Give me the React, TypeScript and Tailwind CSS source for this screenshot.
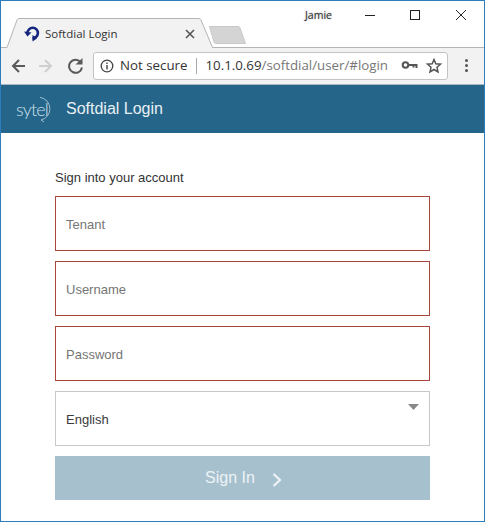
import React from "react";

const Field = ({ label }: { label: string }) => (
  <div className="h-[55px] border border-[#a9473f] bg-white flex items-center pl-[10px] pt-[2px] text-[13px] text-[#757575]">
    {label}
  </div>
);

export default function App() {
  return (
    <div
      className="w-[485px] h-[522px] border border-[#2b7dbd] bg-white flex flex-col overflow-hidden"
      style={{ fontFamily: '"Liberation Sans", Arial, sans-serif' }}
    >
      {/* Title bar with tabs */}
      <div className="relative h-[47px] shrink-0 bg-white border-b border-[#b4b4b4]">
        <svg className="absolute left-0 top-[17px]" width="250" height="30" viewBox="0 0 250 30" fill="none">
          <path d="M6 29.500L16 2C16.500 1 17.500 0.500 19 0.500H197C198.500 0.500 199.500 1 200 2L211.500 29.500" fill="#f2f2f2" stroke="#b4b4b4" />
          <path d="M6.500 29.500H211" stroke="#f2f2f2" strokeWidth="1.500" />
          <path d="M208.500 8.500H237C238 8.500 238.600 9 239 10L244.500 25.500H215C214 25.500 213.400 25 213 24Z" fill="#d4d4d4" stroke="#c8c8c8" />
        </svg>
        <div className="absolute left-[23px] top-[24px]">
          <svg width="16" height="17" viewBox="0 0 16 17" fill="none">
            <path d="M3.500 8A5.200 5.200 0 1 1 8.500 13.200" stroke="#17267f" strokeWidth="2.600" />
            <path d="M0 6.500L3.500 11.500L7.500 7.500Z" fill="#14247a" />
            <path d="M8.500 10V16.500L13 13.500Z" fill="#14247a" />
          </svg>
        </div>
        <span className="absolute left-[44px] top-[25px] text-[11.500px] leading-[15px] text-[#333]" style={{ fontFamily: '"Open Sans", sans-serif' }}>
          Softdial Login
        </span>
        <svg className="absolute left-[184px] top-[28px]" width="10" height="10" viewBox="0 0 10 10">
          <path d="M1 1L9 9M9 1L1 9" stroke="#555" strokeWidth="1.600" />
        </svg>
        <span className="absolute left-[304px] top-[8px] text-[10.500px] leading-[13px] text-[#333]" style={{ fontFamily: '"Open Sans", sans-serif', textShadow: "0 0 2px #999" }}>
          Jamie
        </span>
        <svg className="absolute left-[364px] top-[9px]" width="110" height="12" viewBox="0 0 110 12" fill="none" stroke="#222">
          <path d="M0 5.500H10" />
          <rect x="45.500" y="0.500" width="9" height="9" />
          <path d="M91 0L101 10M101 0L91 10" />
        </svg>
      </div>

      {/* Toolbar */}
      <div className="h-[37px] shrink-0 bg-[#f2f2f2] border-b border-[#a9b9c2] flex items-center">
        <div className="w-[92px] shrink-0 relative h-full">
          <svg className="absolute left-[10px] top-[10px]" width="76" height="16" viewBox="0 0 76 16" fill="none" strokeWidth="2">
            <path d="M14 8H2.500M8 2L2 8L8 14" stroke="#5a5a5a" />
            <path d="M28 8H39.500M34 2L40 8L34 14" stroke="#cfcfcf" />
            <path d="M69.500 4A6.500 6.500 0 1 0 71 9.500" stroke="#5a5a5a" />
            <path d="M64.500 6.500H71.500V0Z" fill="#5a5a5a" />
          </svg>
        </div>
        <div className="w-[355px] h-[28px] shrink-0 bg-white border border-[#c4c4c4] rounded-[3px] flex items-center relative" style={{ fontFamily: '"Open Sans", sans-serif' }}>
          <svg className="ml-[6px] shrink-0" width="14" height="14" viewBox="0 0 14 14" fill="none">
            <circle cx="7" cy="7" r="5.800" stroke="#444" strokeWidth="1.300" />
            <path d="M7 6V10.500M7 3.500V5" stroke="#444" strokeWidth="1.400" />
          </svg>
          <span className="ml-[6px] text-[#333] text-[13.300px]">Not secure</span>
          <span className="ml-[9px] w-px h-[16px] bg-[#aaa]" />
          <span className="ml-[8px] text-[13.300px] text-[#333]">
            10.1.0.69<span className="text-[#777]">/softdial/user/#login</span>
          </span>
          <svg className="absolute left-[307px] top-[5px]" width="44" height="16" viewBox="0 0 44 16" fill="none">
            <circle cx="4.500" cy="7" r="2.800" stroke="#555" strokeWidth="2" />
            <path d="M7.500 7H15.500V10M12.500 7V9.500" stroke="#555" strokeWidth="2" />
            <path d="M33 1.500L34.800 5.800L39.500 6.200L36 9.300L37 14L33 11.500L29 14L30 9.300L26.500 6.200L31.200 5.800Z" stroke="#555" strokeWidth="1.500" />
          </svg>
        </div>
        <div className="flex-1 flex flex-col items-center gap-[2px] pl-[1px] pb-[1px]">
          <span className="w-[3px] h-[3px] rounded-full bg-[#555]" />
          <span className="w-[3px] h-[3px] rounded-full bg-[#555]" />
          <span className="w-[3px] h-[3px] rounded-full bg-[#555]" />
        </div>
      </div>

      {/* App header */}
      <div className="h-[48px] shrink-0 bg-[#246589] flex items-center pl-[15px] pb-[1px]">
        <div className="relative w-[36px] h-[30px] mr-[14px] flex items-center">
          <svg className="absolute left-[11px] top-[1px]" width="30" height="30" viewBox="0 0 30 30" fill="none">
            <path d="M13 2.400A11.500 11.500 0 0 1 14 25L17 27" stroke="#9fc0d2" strokeWidth="1" />
          </svg>
          <span className="relative text-[18px] leading-[20px] text-[#cfe0e9] tracking-[-0.800px]" style={{ fontFamily: 'Lato, sans-serif', fontWeight: 300 }}>sytel</span>
        </div>
        <span className="text-[16px] text-[#e9f0f4]">Softdial Login</span>
      </div>

      {/* Form */}
      <div className="flex-1 flex flex-col px-[54px] pt-[37px]">
        <div className="text-[13px] leading-[16px] text-[#333] mb-[10px]">Sign into your account</div>
        <div className="flex flex-col gap-[10px]">
          <Field label="Tenant" />
          <Field label="Username" />
          <Field label="Password" />
          <div className="h-[55px] border border-[#c8c8c8] bg-white relative flex items-center pl-[10px] text-[13px] text-[#3a3a3a] pt-[2px]">
            English
            <svg className="absolute right-[10px] top-[12px]" width="11" height="6" viewBox="0 0 11 6">
              <path d="M0 0H11L5.500 6Z" fill="#888" />
            </svg>
          </div>
          <div className="h-[44px] bg-[#a7c0ce] flex items-center justify-center pl-[2px] text-[16px] text-[#eef3f6]">
            Sign In
            <svg className="ml-[17px] mt-[3px]" width="10" height="14" viewBox="0 0 10 14" fill="none">
              <path d="M1.500 1L8 7L1.500 13" stroke="#eef3f6" strokeWidth="2.200" />
            </svg>
          </div>
        </div>
      </div>
    </div>
  );
}
